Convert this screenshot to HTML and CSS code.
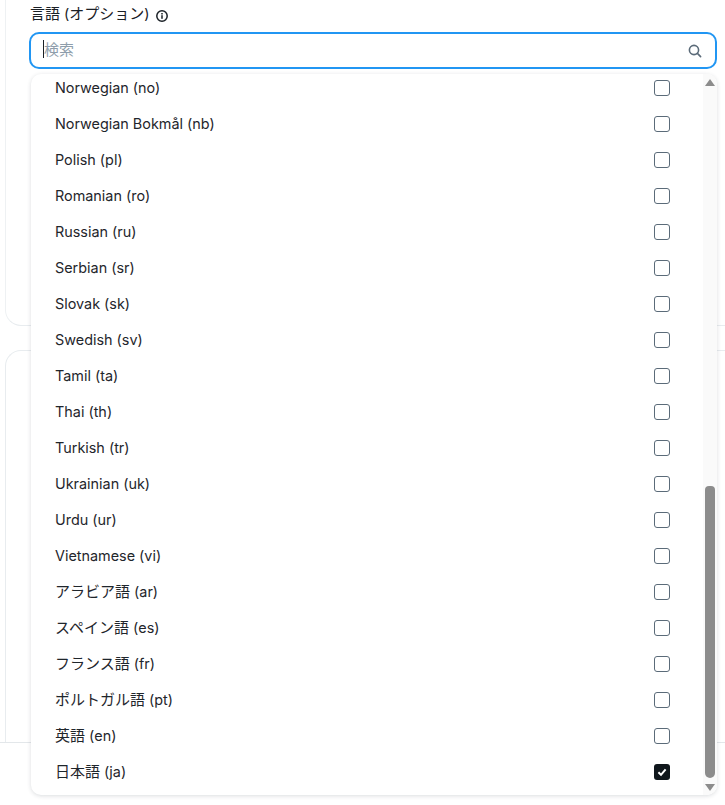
FILE: index.html
```html
<!DOCTYPE html>
<html lang="ja">
<head>
<meta charset="utf-8">
<title>言語</title>
<link rel="stylesheet" href="styles.css">
</head>
<body>
<main class="page">
  <section class="card card-first">
    <div class="label-row">
      <label class="label" for="q"><span class="ja">言語</span> (<span class="ja">オプション</span>)</label>
      <svg class="info" viewBox="0 0 14 14" width="14" height="14" aria-hidden="true"><circle cx="7" cy="7" r="5.2" fill="none" stroke="#1a2026" stroke-width="1.5"/><rect x="6.25" y="6.2" width="1.5" height="3.6" fill="#1a2026"/><rect x="6.25" y="4" width="1.5" height="1.5" fill="#1a2026"/></svg>
    </div>
    <div class="search">
      <input id="q" class="search-input" placeholder="検索">
      <svg class="search-icon" viewBox="0 0 16 16" width="16" height="16" aria-hidden="true"><circle cx="7" cy="7" r="4.6" fill="none" stroke="#5b6b79" stroke-width="1.6"/><path d="M10.4 10.4 L13.6 13.6" stroke="#5b6b79" stroke-width="1.6" stroke-linecap="round"/></svg>
    </div>
    <div class="panel">
      <ul class="list">
        <li class="row"><span class="text">Norwegian (no)</span><i class="box"></i></li>
        <li class="row"><span class="text">Norwegian Bokmål (nb)</span><i class="box"></i></li>
        <li class="row"><span class="text">Polish (pl)</span><i class="box"></i></li>
        <li class="row"><span class="text">Romanian (ro)</span><i class="box"></i></li>
        <li class="row"><span class="text">Russian (ru)</span><i class="box"></i></li>
        <li class="row"><span class="text">Serbian (sr)</span><i class="box"></i></li>
        <li class="row"><span class="text">Slovak (sk)</span><i class="box"></i></li>
        <li class="row"><span class="text">Swedish (sv)</span><i class="box"></i></li>
        <li class="row"><span class="text">Tamil (ta)</span><i class="box"></i></li>
        <li class="row"><span class="text">Thai (th)</span><i class="box"></i></li>
        <li class="row"><span class="text">Turkish (tr)</span><i class="box"></i></li>
        <li class="row"><span class="text">Ukrainian (uk)</span><i class="box"></i></li>
        <li class="row"><span class="text">Urdu (ur)</span><i class="box"></i></li>
        <li class="row"><span class="text">Vietnamese (vi)</span><i class="box"></i></li>
        <li class="row"><span class="text"><span class="ja">アラビア語</span> (ar)</span><i class="box"></i></li>
        <li class="row"><span class="text"><span class="ja">スペイン語</span> (es)</span><i class="box"></i></li>
        <li class="row"><span class="text"><span class="ja">フランス語</span> (fr)</span><i class="box"></i></li>
        <li class="row"><span class="text"><span class="ja">ポルトガル語</span> (pt)</span><i class="box"></i></li>
        <li class="row"><span class="text"><span class="ja">英語</span> (en)</span><i class="box"></i></li>
        <li class="row"><span class="text"><span class="ja">日本語</span> (ja)</span><i class="box checked"><svg viewBox="0 0 16 16" width="16" height="16" aria-hidden="true"><path d="M4.4 8.3 L7 10.8 L11.6 5.4" fill="none" stroke="#fff" stroke-width="2"/></svg></i></li>
      </ul>
      <div class="scrollbar" aria-hidden="true">
        <span class="arrow arrow-up"></span>
        <span class="thumb"></span>
        <span class="arrow arrow-down"></span>
      </div>
    </div>
  </section>
  <section class="card card-second"></section>
  <footer class="footer"></footer>
</main>
</body>
</html>
```
FILE: styles.css
```css
* { box-sizing: border-box; }
html, body { margin: 0; padding: 0; }
body {
  height: 805px;
  overflow: hidden;
  background: #fff;
  font-family: Inter, "Noto Sans CJK JP", sans-serif;
  color: #1f262c;
}
.page { position: relative; height: 805px; }
.ja { font-size: 15px; line-height: 1; }
.card {
  margin-left: 5px;
  border: 1px solid #e8ecef;
  border-right: 0;
  border-radius: 16px 0 0 16px;
}
.card-first {
  position: relative;
  height: 326px;
  padding: 4px 0 0 23px;
  border-top: 0;
  border-left-color: #eef1f3;
  border-radius: 0 0 0 16px;
}
.card-second {
  margin-top: 24px;
  height: 392px;
  border-bottom: 0;
  border-radius: 16px 0 0 0;
}
.footer { border-top: 1px solid #e3e7ea; }
.label-row { display: flex; align-items: center; gap: 5px; height: 20px; padding-left: 1px; }
.label { font-size: 14.4px; line-height: 20px; color: #1a2026; }
.info { display: block; margin-top: 3px; }
.search {
  display: flex;
  align-items: center;
  width: 688px;
  height: 37px;
  margin-top: 8px;
  padding: 0 12px 0 12px;
  border: 2px solid #2196f3;
  border-radius: 10px;
  background: #fff;
}
.search-input {
  flex: 1;
  min-width: 0;
  height: 18px;
  margin-top: -3px;
  border: 0;
  outline: 0;
  padding: 0;
  font: 15px Inter, "Noto Sans CJK JP", sans-serif;
  color: #1a2026;
  caret-color: #1a2026;
  border-left: 1px solid #1a2026;
}
.search-input::placeholder { color: #8e9dab; opacity: 1; }
.search-icon { display: block; }
.panel {
  position: absolute;
  left: 25px;
  top: 74px;
  width: 686px;
  height: 721px;
  overflow: hidden;
  background: #fff;
  border-radius: 10px;
  box-shadow: 0 1px 4px rgba(30, 45, 55, 0.16);
}
.list { list-style: none; margin: -4px 0 0; padding: 0 47px 0 24px; }
.row {
  display: flex;
  align-items: center;
  justify-content: space-between;
  height: 36px;
  font-size: 14.4px;
  color: #1f262c;
}
.text { display: block; line-height: 20px; }
.box {
  display: block;
  width: 16px;
  height: 16px;
  border: 1.5px solid #5b6b79;
  border-radius: 3px;
}
.box.checked { position: relative; border: 0; background: #10171c; }
.box svg { display: block; }
.scrollbar {
  position: absolute;
  top: 0;
  right: 0;
  bottom: 0;
  width: 14px;
  background: #fafafa;
  display: flex;
  flex-direction: column;
  align-items: center;
}
.arrow { width: 0; height: 0; border-left: 5px solid transparent; border-right: 5px solid transparent; }
.arrow-up { margin-top: 5px; border-bottom: 7px solid #8c8c8c; }
.arrow-down { margin-top: 6px; border-top: 7px solid #8c8c8c; }
.thumb { width: 10px; height: 292px; margin-top: 400px; border-radius: 4px 4px 5px 5px; background: #8c8c8c; }
```
